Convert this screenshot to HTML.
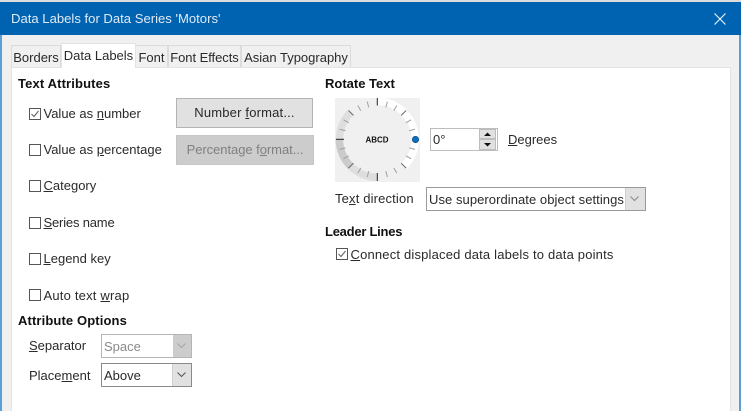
<!DOCTYPE html>
<html><head><meta charset="utf-8"><style>
html,body{margin:0;padding:0;width:741px;height:411px;overflow:hidden;background:#f0f0f0}
body{position:relative;font-family:"Liberation Sans",sans-serif;font-size:13px;color:#2a2a2a;filter:blur(.3px)}
.a{position:absolute}
.t{position:absolute;white-space:nowrap;line-height:16px;height:16px}
.b{font-weight:bold;color:#111}
u{text-underline-offset:1px}
.cb{position:absolute;width:10px;height:10px;border:1px solid #555;background:#fff}
.tab{position:absolute;top:45px;height:22px;background:#f0f0f0;border:1px solid #dcdcdc;border-bottom:none;box-sizing:border-box;text-align:center;line-height:23px;white-space:nowrap}
.btn{position:absolute;box-sizing:border-box;text-align:center;line-height:28px;height:30px}
.sel{position:absolute;box-sizing:border-box;background:#fff;border:1px solid #a6a6a6;height:24px;line-height:23px;padding-left:2px;white-space:nowrap}
.ar{position:absolute;right:0;top:0;width:18px;height:22px;background:#e1e1e1;border-left:1px solid #d0d0d0}
.ar svg{position:absolute;left:3px;top:7px}
</style></head><body>
<div class="a" style="left:0;top:0;width:741px;height:2px;background:#dcdcdc"></div>
<div class="a" style="left:0;top:2px;width:741px;height:33px;background:#0063b1"></div>
<div class="a" style="left:0;top:35px;width:2px;height:376px;background:#5a9fd6"></div>
<div class="a" style="left:739px;top:35px;width:2px;height:376px;background:#5a9fd6"></div>
<div class="t" style="left:11px;top:11px;font-size:13.1px;color:#dfeaf5">Data Labels for Data Series 'Motors'</div>
<svg class="a" style="left:713px;top:12px" width="14" height="14"><path d="M1.5 1.5L12.5 12.5M12.5 1.5L1.5 12.5" stroke="#e6eff8" stroke-width="1.2" fill="none"/></svg>

<div class="a" style="left:11px;top:67px;width:718px;height:344px;background:#fff;border:1px solid #e3e3e3;border-bottom:none"></div>
<div class="tab" style="left:11px;width:50px">Borders</div>
<div class="tab" style="left:135px;width:33px">Font</div>
<div class="tab" style="left:168px;width:73px;letter-spacing:-.05px">Font Effects</div>
<div class="tab" style="left:241px;width:110px">Asian Typography</div>
<div class="tab" style="left:61px;width:75px;top:43px;height:25px;background:#fff;line-height:24px;border-color:#e3e3e3;z-index:2">Data Labels</div>

<div class="t b" style="left:18px;top:76px;letter-spacing:.14px">Text Attributes</div>
<div class="cb" style="left:29px;top:108px"></div>
<svg class="a" style="left:29px;top:108px" width="12" height="12"><path d="M2.5 6L5 8.500L9.500 3" stroke="#666" stroke-width="1.100" fill="none"/></svg>
<div class="t" style="left:43.5px;top:105.5px">Value as <u>n</u>umber</div>
<div class="cb" style="left:29px;top:144px"></div>
<div class="t" style="left:43.5px;top:141.5px">Value as <u>p</u>ercentage</div>
<div class="cb" style="left:29px;top:180px"></div>
<div class="t" style="left:43.5px;top:178px"><u>C</u>ategory</div>
<div class="cb" style="left:29px;top:217px"></div>
<div class="t" style="left:43.5px;top:214.5px;letter-spacing:-.18px"><u>S</u>eries name</div>
<div class="cb" style="left:29px;top:253px"></div>
<div class="t" style="left:43.5px;top:250.5px"><u>L</u>egend key</div>
<div class="cb" style="left:29px;top:289px"></div>
<div class="t" style="left:43.5px;top:287.500px;letter-spacing:.2px">Auto text <u>w</u>rap</div>

<div class="btn" style="left:176px;top:98px;width:137px;background:#e1e1e1;border:1px solid #b4b4b4;letter-spacing:.18px">Number <u>f</u>ormat...</div>
<div class="btn" style="left:176px;top:135px;width:138px;background:#cccccc;border:1px solid #c6c6c6;color:#808080;letter-spacing:-.05px">Percentage f<u>o</u>rmat...</div>

<div class="t b" style="left:18px;top:312.500px;letter-spacing:.12px">Attribute Options</div>
<div class="t" style="left:29px;top:338px"><u>S</u>eparator</div>
<div class="sel" style="left:101px;top:334px;width:91px;color:#8a8a8a;border-color:#b5b5b5"><span>Space</span><div class="ar" style="background:#cccccc;border-left:none"><svg width="11" height="8"><path d="M1.500 1.500L5.500 5.500L9.500 1.500" stroke="#a5a5a5" fill="none"/></svg></div></div>
<div class="t" style="left:29px;top:367.500px">Place<u>m</u>ent</div>
<div class="sel" style="left:101px;top:363px;width:91px;border-color:#8a8a8a"><span>Above</span><div class="ar"><svg width="11" height="8"><path d="M1.500 1.500L5.500 5.500L9.500 1.500" stroke="#555" fill="none"/></svg></div></div>

<div class="t b" style="left:325px;top:76px">Rotate Text</div>
<svg class="a" style="left:335px;top:98px" width="85" height="84" viewBox="335 98 85 84">
<rect x="335" y="98" width="85" height="84" fill="#f0f0f0"/>
<path d="M377.300 101.300A38 38 0 0 1 404 166.300" fill="none" stroke="#fff" stroke-width="7.500"/>
<path d="M350.500 112.500A38 38 0 0 0 377.300 177.300" fill="none" stroke="#dedede" stroke-width="7.500"/>
<path d="M339.300 139.300A38 38 0 0 0 351 166.500" fill="none" stroke="#cbcbcb" stroke-width="7.500"/>
<g stroke="#a0a0a0" stroke-width="1">
<path d="M377.300 100.300V106.300" transform="rotate(15 377.300 139.300)"/>
<path d="M377.300 100.300V106.300" transform="rotate(30 377.300 139.300)"/>
<path d="M377.300 100.300V106.300" transform="rotate(60 377.300 139.300)"/>
<path d="M377.300 100.300V106.300" transform="rotate(75 377.300 139.300)"/>
<path d="M377.300 100.300V106.300" transform="rotate(105 377.300 139.300)"/>
<path d="M377.300 100.300V106.300" transform="rotate(120 377.300 139.300)"/>
<path d="M377.300 100.300V106.300" transform="rotate(150 377.300 139.300)"/>
<path d="M377.300 100.300V106.300" transform="rotate(165 377.300 139.300)"/>
<path d="M377.300 100.300V106.300" transform="rotate(195 377.300 139.300)"/>
<path d="M377.300 100.300V106.300" transform="rotate(210 377.300 139.300)"/>
<path d="M377.300 100.300V106.300" transform="rotate(240 377.300 139.300)"/>
<path d="M377.300 100.300V106.300" transform="rotate(255 377.300 139.300)"/>
<path d="M377.300 100.300V106.300" transform="rotate(285 377.300 139.300)"/>
<path d="M377.300 100.300V106.300" transform="rotate(300 377.300 139.300)"/>
<path d="M377.300 100.300V106.300" transform="rotate(330 377.300 139.300)"/>
<path d="M377.300 100.300V106.300" transform="rotate(345 377.300 139.300)"/>
</g>
<g stroke="#222" stroke-width="1">
<path d="M377.300 97.500V105.500"/>
<path d="M377.300 173V181"/>
<path d="M336 139.300H344"/>
<path d="M377.300 98.500V105.500" transform="rotate(45 377.300 139.300)" stroke="#666"/>
<path d="M377.300 98.500V105.500" transform="rotate(135 377.300 139.300)" stroke="#666"/>
<path d="M377.300 98.500V105.500" transform="rotate(225 377.300 139.300)" stroke="#666"/>
<path d="M377.300 98.500V105.500" transform="rotate(315 377.300 139.300)" stroke="#666"/>
</g>
<circle cx="415.500" cy="139.500" r="3.200" fill="#0a6fc4" stroke="#0b3f70" stroke-width=".6"/>
<text x="377" y="142.500" text-anchor="middle" font-family="Liberation Sans" font-size="8" font-weight="bold" fill="#111">ABCD</text>
</svg>

<div class="a" style="left:430px;top:128px;width:68px;height:23px;box-sizing:border-box;background:#fff;border:1px solid #bdbdbd"></div>
<div class="t" style="left:433px;top:132px">0°</div>
<div class="a" style="left:479px;top:129px;width:17px;height:10px;background:#e1e1e1;border:1px solid #bdbdbd;box-sizing:border-box"></div>
<div class="a" style="left:479px;top:139px;width:17px;height:11px;background:#e1e1e1;border:1px solid #bdbdbd;box-sizing:border-box"></div>
<svg class="a" style="left:479px;top:129px" width="17" height="21"><path d="M5 7L8.500 3.500L12 7Z M5 14L8.500 17.500L12 14Z" fill="#111"/></svg>
<div class="t" style="left:508px;top:132px"><u>D</u>egrees</div>

<div class="t" style="left:335px;top:191px;letter-spacing:.15px">Te<u>x</u>t direction</div>
<div class="sel" style="left:426px;top:187px;width:220px;border-color:#9a9a9a;letter-spacing:.06px"><span>Use superordinate object settings</span><div class="ar" style="width:19px"><svg width="11" height="8"><path d="M1.500 1.500L5.500 5.500L9.500 1.500" stroke="#888" fill="none"/></svg></div></div>

<div class="t b" style="left:325px;top:223.500px;letter-spacing:-.25px">Leader Lines</div>
<div class="cb" style="left:336px;top:248px"></div>
<svg class="a" style="left:336px;top:248px" width="12" height="12"><path d="M2.500 6L5 8.500L9.500 3" stroke="#666" stroke-width="1.100" fill="none"/></svg>
<div class="t" style="left:350.500px;top:246.500px;letter-spacing:.18px"><u>C</u>onnect displaced data labels to data points</div>
</body></html>
